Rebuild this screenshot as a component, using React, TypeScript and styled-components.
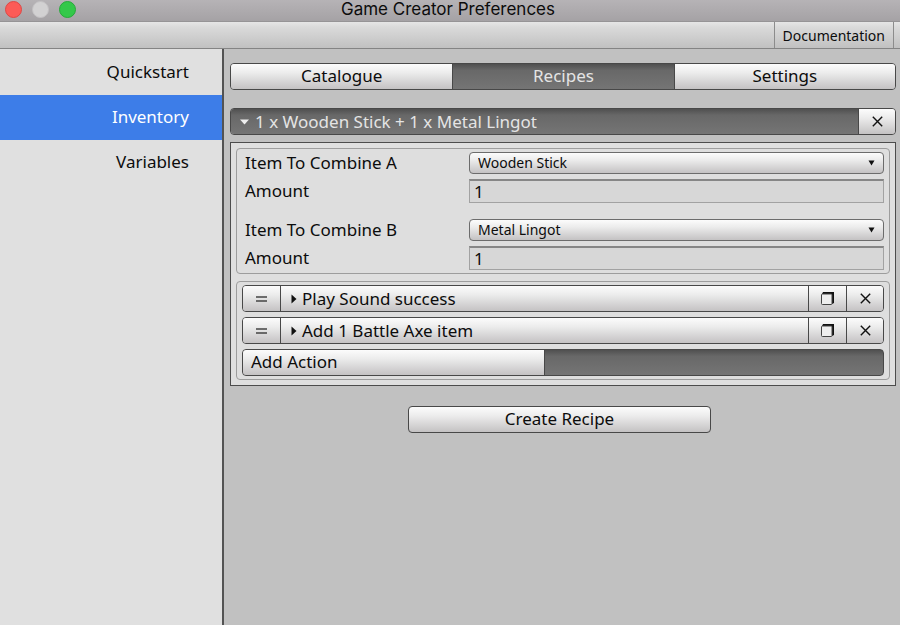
import React from "react";
import styled, { createGlobalStyle, css } from "styled-components";

const GlobalStyle = createGlobalStyle`
  * { box-sizing: border-box; }
  html, body, #root { height: 100%; }
  body {
    margin: 0;
    background: #c1c1c1;
    color: #0c0c0c;
    font-family: "Noto Sans", "Open Sans", sans-serif;
    font-size: 17px;
    line-height: 23px;
  }
  button, input, select { font: inherit; color: inherit; margin: 0; }
`;

const raised = css`
  background: linear-gradient(#fcfcfc 0%, #ececec 35%, #c4c2c3 100%);
  color: #0c0c0c;
`;

const sunken = css`
  background: linear-gradient(#505050 0%, #686868 25%, #757575 100%);
  color: #e4e4e4;
`;

const Window = styled.div`
  display: flex;
  flex-direction: column;
  min-height: 100%;
`;

const TitleBar = styled.header`
  display: grid;
  grid-template-columns: 1fr auto 1fr;
  align-items: center;
  height: 22px;
  padding: 0 9px 2px 5px;
  background: linear-gradient(#b6b3b6, #a5a2a5);
  border-bottom: 1px solid #969496;
`;

const Lights = styled.div`
  display: flex;
  gap: 10px;
`;

const Light = styled.button<{ $fill: string; $edge: string }>`
  width: 17px;
  height: 17px;
  padding: 0;
  border: 1px solid ${(p) => p.$edge};
  border-radius: 50%;
  background: ${(p) => p.$fill};
`;

const WindowTitle = styled.h1`
  margin: 0;
  font-family: Inter, Roboto, sans-serif;
  font-size: 17px;
  font-weight: 400;
  line-height: 19px;
`;

const Toolbar = styled.nav`
  display: flex;
  justify-content: flex-end;
  height: 27px;
  padding-right: 6px;
  background: linear-gradient(#e6e6e6, #dadada 20%, #c1c1c1);
  border-bottom: 1px solid #848484;
`;

const ToolbarLink = styled.a`
  display: flex;
  align-items: center;
  padding: 0 8px;
  border: solid #8c8c8c;
  border-width: 0 1px;
  color: inherit;
  font-size: 14px;
  text-decoration: none;
`;

const Body = styled.div`
  display: flex;
  flex: 1;
`;

const Sidebar = styled.nav`
  flex: 0 0 224px;
  padding-top: 1px;
  background: #e0e0e0;
  border-right: 2px solid #535353;
`;

const SidebarItem = styled.button<{ $active?: boolean }>`
  display: block;
  width: 100%;
  height: 45px;
  padding: 0 33px 2px 0;
  border: 0;
  background: ${(p) => (p.$active ? "#3d7de8" : "transparent")};
  color: ${(p) => (p.$active ? "#fff" : "inherit")};
  text-align: right;
`;

const Main = styled.main`
  flex: 1;
  min-width: 0;
  padding: 14px 4px 20px 6px;
`;

const Bar = styled.div`
  display: flex;
  height: 27px;
  border: 1px solid #484848;
  border-radius: 4px;
  overflow: hidden;
`;

const Tabs = styled(Bar)`
  display: grid;
  grid-template-columns: repeat(3, 1fr);
  margin-bottom: 18px;
`;

const Segment = styled.button<{ $down?: boolean }>`
  ${(p) => (p.$down ? sunken : raised)}
  display: flex;
  align-items: center;
  justify-content: center;
  padding: 0 0 2px;
  border: 0;
  & + & { border-left: 1px solid #484848; }
`;

const HeaderTitle = styled(Segment)`
  flex: 1;
  justify-content: flex-start;
  gap: 5px;
  padding: 0 0 0 8px;
`;

const IconSegment = styled(Segment)<{ $width?: number }>`
  flex: 0 0 ${(p) => p.$width ?? 37}px;
  padding: 0;
  border-left: 1px solid #484848;
  &:first-child { border-left: 0; }
`;

const ActionTitle = styled(Segment)`
  flex: 1;
  justify-content: flex-start;
  gap: 4px;
  padding: 0 0 0 9px;
  border-left: 1px solid #484848;
`;

const AddBar = styled(Bar)`
  ${sunken}
`;

const AddSegment = styled(Segment)`
  flex: 0 0 302px;
  justify-content: flex-start;
  padding: 0 0 2px 8px;
  border-right: 1px solid #484848;
`;

const Panel = styled.section`
  display: flex;
  flex-direction: column;
  gap: 7px;
  margin-top: 7px;
  padding: 5px;
  background: #dfdfdf;
  border: 1px solid #4c4c4c;
`;

const Group = styled.div`
  padding: 3px 5px;
  background: #dedede;
  border: 1px solid #9d9d9d;
  border-radius: 4px;
`;

const Fields = styled(Group)`
  display: flex;
  flex-direction: column;
  gap: 16px;
`;

const FieldPair = styled.div`
  display: grid;
  grid-template-columns: minmax(0, 224fr) minmax(0, 415fr);
  grid-template-rows: 22px 24px;
  row-gap: 5px;
  align-items: center;
  padding-left: 3px;
`;

const FieldLabel = styled.label`
  padding-bottom: 1px;
  line-height: 21px;
`;

const Actions = styled(Group)`
  display: flex;
  flex-direction: column;
  gap: 5px;
`;

const SelectWrap = styled.div`
  position: relative;
  height: 22px;
`;

const Select = styled.select`
  ${raised}
  appearance: none;
  display: block;
  width: 100%;
  height: 22px;
  padding: 0 24px 0 8px;
  border: 1px solid #6c6c6c;
  border-radius: 4px;
  font-size: 14px;
  line-height: 20px;
`;

const SelectArrow = styled.svg`
  position: absolute;
  top: 8px;
  right: 9px;
  pointer-events: none;
`;

const NumberBox = styled.input`
  width: 100%;
  height: 24px;
  padding: 0 4px 1px;
  border: 1px solid #a2a2a2;
  border-top: 2px solid #868686;
  border-radius: 0;
  background: #d7d7d7;
`;

const Footer = styled.div`
  display: flex;
  justify-content: center;
  margin-top: 20px;
  padding-right: 7px;
`;

const CreateButton = styled.button`
  ${raised}
  width: 303px;
  height: 27px;
  padding: 0 0 2px;
  border: 1px solid #484848;
  border-radius: 4px;
`;

const CloseIcon = () => (
  <svg width="11" height="11" viewBox="0 0 11 11" fill="none" stroke="#111" strokeWidth="1.4" aria-hidden="true">
    <path d="M.8.8 10.2 10.2M10.2.8.8 10.2" />
  </svg>
);

const CopyIcon = () => (
  <svg width="13" height="13" viewBox="0 0 13 13" fill="none" aria-hidden="true">
    <path d="M2 0h11v11l-2 1V2H1z" fill="#111" />
    <rect x=".5" y="2" width="10.500" height="10.500" rx="1" fill="#eee" stroke="#444" />
  </svg>
);

const GripIcon = () => (
  <svg width="11" height="6" viewBox="0 0 11 6" aria-hidden="true">
    <path d="M0 1h11M0 5h11" stroke="#444" strokeWidth="1.4" />
  </svg>
);

const DownIcon = () => (
  <svg width="11" height="6" viewBox="0 0 11 6" aria-hidden="true">
    <path d="M1 .5h9L5.500 5.500z" fill="#eee" />
  </svg>
);

const RightIcon = () => (
  <svg width="8" height="10" viewBox="0 0 8 10" aria-hidden="true">
    <path d="M1.500 .5v9L6.500 5z" fill="#111" />
  </svg>
);

const sidebarItems = ["Quickstart", "Inventory", "Variables"];
const tabs = ["Catalogue", "Recipes", "Settings"];
const itemNames = ["Wooden Stick", "Metal Lingot"];
const ingredients = [
  { slot: "A", item: "Wooden Stick" },
  { slot: "B", item: "Metal Lingot" },
];
const actions = ["Play Sound success", "Add 1 Battle Axe item"];

export default function App() {
  return (
    <Window>
      <GlobalStyle />
      <TitleBar>
        <Lights>
          <Light aria-label="Close window" $fill="#fc5b57" $edge="#df4744" />
          <Light aria-label="Minimize window" $fill="#d2d1d2" $edge="#c3c1c3" />
          <Light aria-label="Zoom window" $fill="#34c84a" $edge="#27a93a" />
        </Lights>
        <WindowTitle>Game Creator Preferences</WindowTitle>
      </TitleBar>
      <Toolbar>
        <ToolbarLink href="#documentation">Documentation</ToolbarLink>
      </Toolbar>
      <Body>
        <Sidebar>
          {sidebarItems.map((name) => (
            <SidebarItem key={name} $active={name === "Inventory"}>{name}</SidebarItem>
          ))}
        </Sidebar>
        <Main>
          <Tabs role="tablist">
            {tabs.map((name) => (
              <Segment key={name} role="tab" aria-selected={name === "Recipes"} $down={name === "Recipes"}>
                {name}
              </Segment>
            ))}
          </Tabs>
          <Bar>
            <HeaderTitle $down aria-expanded="true">
              <DownIcon />
              1 x Wooden Stick + 1 x Metal Lingot
            </HeaderTitle>
            <IconSegment aria-label="Delete recipe">
              <CloseIcon />
            </IconSegment>
          </Bar>
          <Panel>
            <Fields>
              {ingredients.map(({ slot, item }) => (
                <FieldPair key={slot}>
                  <FieldLabel htmlFor={`item-${slot}`}>Item To Combine {slot}</FieldLabel>
                  <SelectWrap>
                    <Select id={`item-${slot}`} defaultValue={item}>
                      {itemNames.map((name) => (
                        <option key={name}>{name}</option>
                      ))}
                    </Select>
                    <SelectArrow width="7" height="6" viewBox="0 0 7 6" aria-hidden="true">
                      <path d="M.5.500h6L3.500 5.500z" fill="#111" />
                    </SelectArrow>
                  </SelectWrap>
                  <FieldLabel htmlFor={`amount-${slot}`}>Amount</FieldLabel>
                  <NumberBox id={`amount-${slot}`} inputMode="numeric" defaultValue="1" />
                </FieldPair>
              ))}
            </Fields>
            <Actions>
              {actions.map((name) => (
                <Bar key={name}>
                  <IconSegment aria-label="Reorder action"><GripIcon /></IconSegment>
                  <ActionTitle aria-expanded="false">
                    <RightIcon />
                    {name}
                  </ActionTitle>
                  <IconSegment aria-label="Duplicate action" $width={38}><CopyIcon /></IconSegment>
                  <IconSegment aria-label="Delete action"><CloseIcon /></IconSegment>
                </Bar>
              ))}
              <AddBar>
                <AddSegment>Add Action</AddSegment>
              </AddBar>
            </Actions>
          </Panel>
          <Footer>
            <CreateButton>Create Recipe</CreateButton>
          </Footer>
        </Main>
      </Body>
    </Window>
  );
}
